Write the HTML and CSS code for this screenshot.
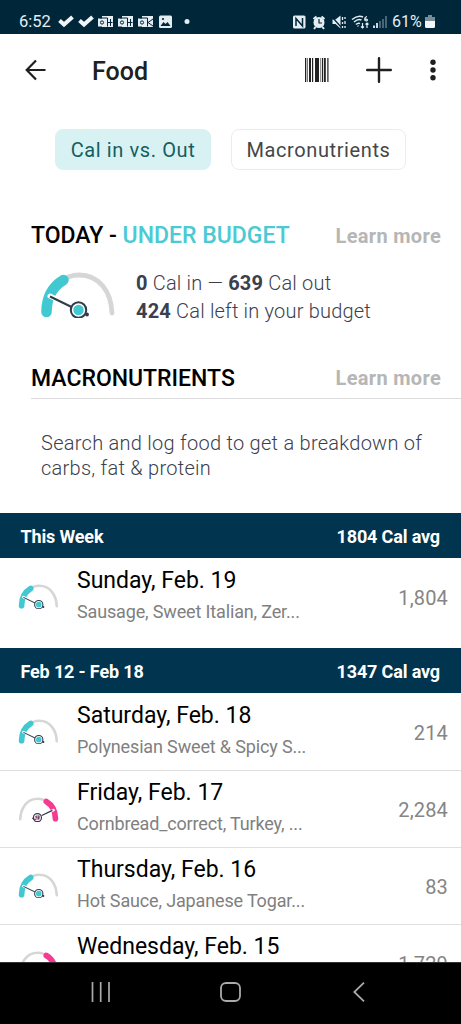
FILE: index.html
```
<!DOCTYPE html>
<html lang="en">
<head>
<meta charset="utf-8">
<title>Food</title>
<link rel="stylesheet" href="styles.css">
</head>
<body>
<svg class="defs" aria-hidden="true">
  <symbol id="gauge-under" viewBox="0 0 80 50">
    <path d="M24 13C29 8.500 35 7 41 7C61 7 73 23 74 45" fill="none" stroke="#d6d6d6" stroke-width="4.800" stroke-linecap="round"/>
    <path d="M8.500 44C8.500 30 14 19 25.500 12" fill="none" stroke="#42c8d0" stroke-width="10.500" stroke-linecap="round"/>
    <path d="M12 28L37 40" stroke="#fff" stroke-width="5" stroke-linecap="round"/>
    <path d="M12 28.500L49 46.500" stroke="#323b49" stroke-width="2"/>
    <circle cx="49" cy="46.500" r="1.900" fill="#323b49"/>
    <circle cx="40.500" cy="42" r="7.700" fill="#fff" stroke="#323b49" stroke-width="2"/>
    <circle cx="40.500" cy="42" r="5.200" fill="#42c8d0"/>
  </symbol>
  <symbol id="gauge-over" viewBox="0 0 80 50">
    <path d="M6 45C7 23 19 7 39 7C45 7 51 8.500 56 13" fill="none" stroke="#d6d6d6" stroke-width="4.800" stroke-linecap="round"/>
    <path d="M54.500 12C66 19 71.500 30 71.500 44" fill="none" stroke="#f43a91" stroke-width="10.500" stroke-linecap="round"/>
    <path d="M68 28L43 40" stroke="#fff" stroke-width="5" stroke-linecap="round"/>
    <path d="M66 28.500L46 38" stroke="#323b49" stroke-width="2.400"/>
    <circle cx="38" cy="42" r="7.500" fill="#fff" stroke="#323b49" stroke-width="2.200"/>
    <circle cx="38" cy="42" r="5" fill="#f98bbd"/>
    <path d="M28 43L35 46M35 39L38 43M41 38L40 45" stroke="#323b49" stroke-width="1.800"/>
  </symbol>
</svg>
<div class="screen">
  <header class="status">
    <span class="clock">6:52</span>
    <svg class="status-left" viewBox="0 0 140 16" width="140" height="16">
      <g fill="none" stroke="#eef4f7" stroke-width="4"><path d="M1.500 6.500L6 10.500L14.500 3M21.500 6.500L26 10.500L34.500 3"/></g>
      <g fill="#e3edf2">
        <path d="M44 2h11v11H44zM40 4.500h9v8h-9zM64 2h11v11H64zM60 4.500h9v8h-9zM84 2h11v11H84zM80 4.500h9v8h-9z"/>
        <rect x="101" y="1.500" width="13" height="12.500" rx="1.500"/>
        <circle cx="129" cy="7.500" r="2.500"/>
      </g>
      <g fill="none" stroke="#00263a" stroke-width="1">
        <circle cx="44" cy="8.500" r="1.600"/><circle cx="64" cy="8.500" r="1.600"/><circle cx="84" cy="8.500" r="1.600"/>
        <path d="M42 4h7.500v8.500M49.500 8.500h5M52.500 5v7M62 4h7.500v8.500M69.500 8.500h5M72.500 5v7M82 4h7.500v8.500M95 5l-5 3.500l5 3.500"/>
      </g>
      <path d="M102.500 12l3-4 2 2 2-2 3 4z" fill="#00263a"/><circle cx="105" cy="5" r="1.100" fill="#00263a"/>
    </svg>
    <svg class="status-right" viewBox="0 0 96 18" width="96" height="18">
      <rect x="1" y="2.500" width="12.500" height="13" rx="1.500" fill="#e3edf2"/>
      <path d="M4 13V5.500L10.500 13V5" fill="none" stroke="#00263a" stroke-width="1.500"/>
      <circle cx="27" cy="9.500" r="5.500" fill="#e3edf2"/>
      <path d="M21.500 6l3-2.500M29.500 3.500l3 2.500M23.500 14l-1.500 2M30.500 14l1.500 2" stroke="#e3edf2" stroke-width="2"/>
      <path d="M27 6v4h3" fill="none" stroke="#00263a" stroke-width="1.200"/>
      <path d="M40.500 6.500h3l5-4v13l-5-4.500h-3z" fill="#e3edf2"/>
      <path d="M40 4l10 11" stroke="#00263a" stroke-width="1.200"/>
      <path d="M50.500 4v3M50.500 9v2M50.500 13v2M53 4v2M53 8v3M53 13v2" stroke="#e3edf2" stroke-width="1.300"/>
      <g fill="none" stroke="#e3edf2" stroke-width="1.500"><path d="M60 6.500Q66 1.500 71 4M62 9Q66 5.500 69.500 7M64 11.500Q66 9.500 68 10.500"/><path d="M75 3.500q-3 1-2 4q2.500 1 2.500-.7q-1-1.300-2.500-.3" stroke-width="1.200"/><path d="M70.500 10v5M69 13.500l1.500 1.500 1.500-1.500M75 15v-5M73.500 11.500l1.500-1.500 1.500 1.500" stroke-width="1.200"/></g>
      <path d="M67 12l-1 2-1-1z" fill="#e3edf2"/>
      <path d="M82 15v-2.500M85 15v-5" stroke="#e3edf2" stroke-width="1.800"/>
      <path d="M88 15V8M91 15V6M94 15V3" stroke="#587080" stroke-width="1.700"/>
    </svg>
    <span class="percent">61%</span>
    <svg class="battery" viewBox="0 0 10 14" width="10" height="14"><path d="M3 0h4v2h3v4H0V2h3z" fill="#788c98"/><path d="M0 6h10v5.500q0 1.500-1.500 1.500h-7Q0 13 0 11.500z" fill="#f2f6f8"/></svg>
  </header>

  <nav class="appbar">
    <svg class="back" width="22" height="22" viewBox="0 0 22 22"><path d="M20.500 11H2M11 1.500L1.700 11L11 20.500" fill="none" stroke="#1f1f1f" stroke-width="2.200"/></svg>
    <h1>Food</h1>
    <svg class="barcode" width="24" height="24" viewBox="0 0 24 24"><g fill="#222"><rect x="0" width="1.300" height="24"/><rect x="2" width="1" height="24" fill="#777"/><rect x="4" width="2" height="24"/><rect x="7" width="1.200" height="24"/><rect x="10" width="4" height="24"/><rect x="15.200" width="1" height="24" fill="#777"/><rect x="17" width="1.200" height="24"/><rect x="19" width="1.800" height="24"/><rect x="22.300" width="1.200" height="24"/></g></svg>
    <svg class="plus" width="26" height="26" viewBox="0 0 26 26"><path d="M13 1.200V24.800M1.200 13H24.800" stroke="#1f1f1f" stroke-width="2.400" stroke-linecap="round"/></svg>
    <svg class="more" width="6" height="22" viewBox="0 0 6 22"><g fill="#1f1f1f"><circle cx="3" cy="3.200" r="2.700"/><circle cx="3" cy="11" r="2.700"/><circle cx="3" cy="18.800" r="2.700"/></g></svg>
  </nav>

  <div class="chips">
    <button class="chip selected">Cal in vs. Out</button>
    <button class="chip">Macronutrients</button>
  </div>

  <section class="today">
    <div class="heading"><h2>TODAY - <em>UNDER BUDGET</em></h2><a class="learn">Learn more</a></div>
    <div class="summary">
      <svg class="gauge-large"><use href="#gauge-under"/></svg>
      <div class="stats"><p><b>0</b> Cal in — <b>639</b> Cal out</p><p><b>424</b> Cal left in your budget</p></div>
    </div>
  </section>

  <section class="macros">
    <div class="heading ruled"><h2>MACRONUTRIENTS</h2><a class="learn">Learn more</a></div>
    <p class="hint">Search and log food to get a breakdown of<br>carbs, fat &amp; protein</p>
  </section>

  <main class="log">
    <div class="week"><span>This Week</span><span>1804 Cal avg</span></div>
    <article class="day last"><svg class="gauge"><use href="#gauge-under"/></svg><div class="info"><h3>Sunday, Feb. 19</h3><p>Sausage, Sweet Italian, Zer...</p></div><span class="cal">1,804</span></article>
    <div class="week"><span>Feb 12 - Feb 18</span><span>1347 Cal avg</span></div>
    <article class="day"><svg class="gauge"><use href="#gauge-under"/></svg><div class="info"><h3>Saturday, Feb. 18</h3><p>Polynesian Sweet &amp; Spicy S...</p></div><span class="cal">214</span></article>
    <article class="day"><svg class="gauge over"><use href="#gauge-over"/></svg><div class="info"><h3>Friday, Feb. 17</h3><p>Cornbread_correct, Turkey, ...</p></div><span class="cal">2,284</span></article>
    <article class="day"><svg class="gauge"><use href="#gauge-under"/></svg><div class="info"><h3>Thursday, Feb. 16</h3><p>Hot Sauce, Japanese Togar...</p></div><span class="cal">83</span></article>
    <article class="day"><svg class="gauge over"><use href="#gauge-over"/></svg><div class="info"><h3>Wednesday, Feb. 15</h3></div><span class="cal">1,729</span></article>
  </main>

  <footer class="navbar">
    <svg width="20" height="20" viewBox="0 0 20 20"><path d="M1.500 0V20M9.700 0V20M18 0V20" stroke="#aaa" stroke-width="1.700"/></svg>
    <svg class="home" width="21" height="20" viewBox="0 0 21 20"><rect x="1" y="1" width="19" height="18" rx="5" fill="none" stroke="#aaa" stroke-width="1.800"/></svg>
    <svg width="12" height="20" viewBox="0 0 12 20"><path d="M11 .7L1.300 10L11 19.300" fill="none" stroke="#aaa" stroke-width="1.800"/></svg>
  </footer>
</div>
</body>
</html>
```
FILE: styles.css
```
* { box-sizing: border-box; margin: 0; padding: 0; }
body { background: #fff; font-family: Roboto, sans-serif; color: #000; overflow: hidden; }
.defs { display: none; }
.screen { width: 461px; height: 1024px; display: flex; flex-direction: column; overflow: hidden; background: #fff; white-space: nowrap; }
.status { height: 34px; flex: none; background: #00263a; color: #e6eef2; display: flex; align-items: center; padding: 9px 0 0 19px; font-size: 16.500px; line-height: 20px; }
.clock { width: 39px; }
.status-left { flex: none; }
.status-right { margin-left: 94px; flex: none; }
.percent { width: 32px; margin-left: 4px; font-size: 16px; }
.battery { margin-left: 1px; flex: none; }
.appbar { height: 95px; flex: none; display: flex; align-items: center; padding: 0 0 23px 25px; }
h1 { font-size: 25px; font-weight: 500; line-height: 30px; color: #202020; width: 190px; margin: 3px 23px 0 45px; }
.plus { margin-left: 37px; }
.more { margin-left: 38px; }
.chips { display: flex; gap: 20px; padding-left: 55px; height: 41px; flex: none; }
.chip { height: 41px; width: 175px; border: 1.500px solid #ececec; border-radius: 8px; background: #fff; color: #464646; font: 400 20px/24px Roboto, sans-serif; letter-spacing: .6px; white-space: nowrap; }
.chip.selected { width: 156px; background: #d8f2f4; border-color: #d8f2f4; color: #135e62; }
.today { height: 190px; flex: none; padding-top: 49px; }
.heading { display: flex; justify-content: space-between; align-items: center; height: 32px; margin-left: 31px; padding-right: 20px; }
h2 { font-size: 23px; font-weight: 500; line-height: 30px; padding-top: 2px; }
h2 em { font-style: normal; color: #4bcad3; }
.learn { color: #b6b6b6; font-size: 20px; font-weight: 700; letter-spacing: .3px; padding-top: 1px; }
.summary { display: flex; padding: 17px 0 0 38px; }
.gauge-large { width: 80px; height: 50px; }
.stats { margin-left: 18px; font-size: 20px; font-weight: 300; line-height: 28px; letter-spacing: .19px; color: #3a404d; margin-top: 1px; }
.stats b { font-weight: 700; }
.macros { height: 153px; flex: none; padding-top: 1px; }
.ruled { height: 38px; border-bottom: 1px solid #dcdcdc; padding-bottom: 4px; }
.hint { margin: 32px 0 0 41px; font-size: 20px; line-height: 25px; letter-spacing: .27px; font-weight: 300; color: #3a404d; }
.log { height: 449px; flex: none; overflow: hidden; }
.week { height: 45px; background: #00344f; color: #fff; font-size: 18px; font-weight: 700; line-height: 22px; letter-spacing: -.15px; display: flex; justify-content: space-between; align-items: center; padding: 2px 21px 0 20.500px; }
.day { height: 77px; display: flex; align-items: flex-start; padding-right: 13px; }
.day + .day { box-shadow: inset 0 1px #dfdfdf; }
.day.last { height: 90px; }
.gauge { width: 43px; height: 27px; margin: 24px 0 0 16.500px; flex: none; }
.gauge.over { margin-top: 25px; }
.info { margin: 9px 0 0 17.500px; flex: 1; }
h3 { font-size: 23px; font-weight: 400; line-height: 28px; }
.info p { color: #808080; font-size: 18px; line-height: 24px; letter-spacing: -.15px; margin-top: 5px; }
.cal { color: #858585; font-size: 20px; line-height: 24px; letter-spacing: .15px; margin-top: 28px; }
.navbar { flex: 1; background: #000; display: flex; align-items: flex-start; justify-content: space-between; padding: 19px 96px 0 91px; border-top: 1px solid #333; }
.home { margin-right: 4px; }
```
